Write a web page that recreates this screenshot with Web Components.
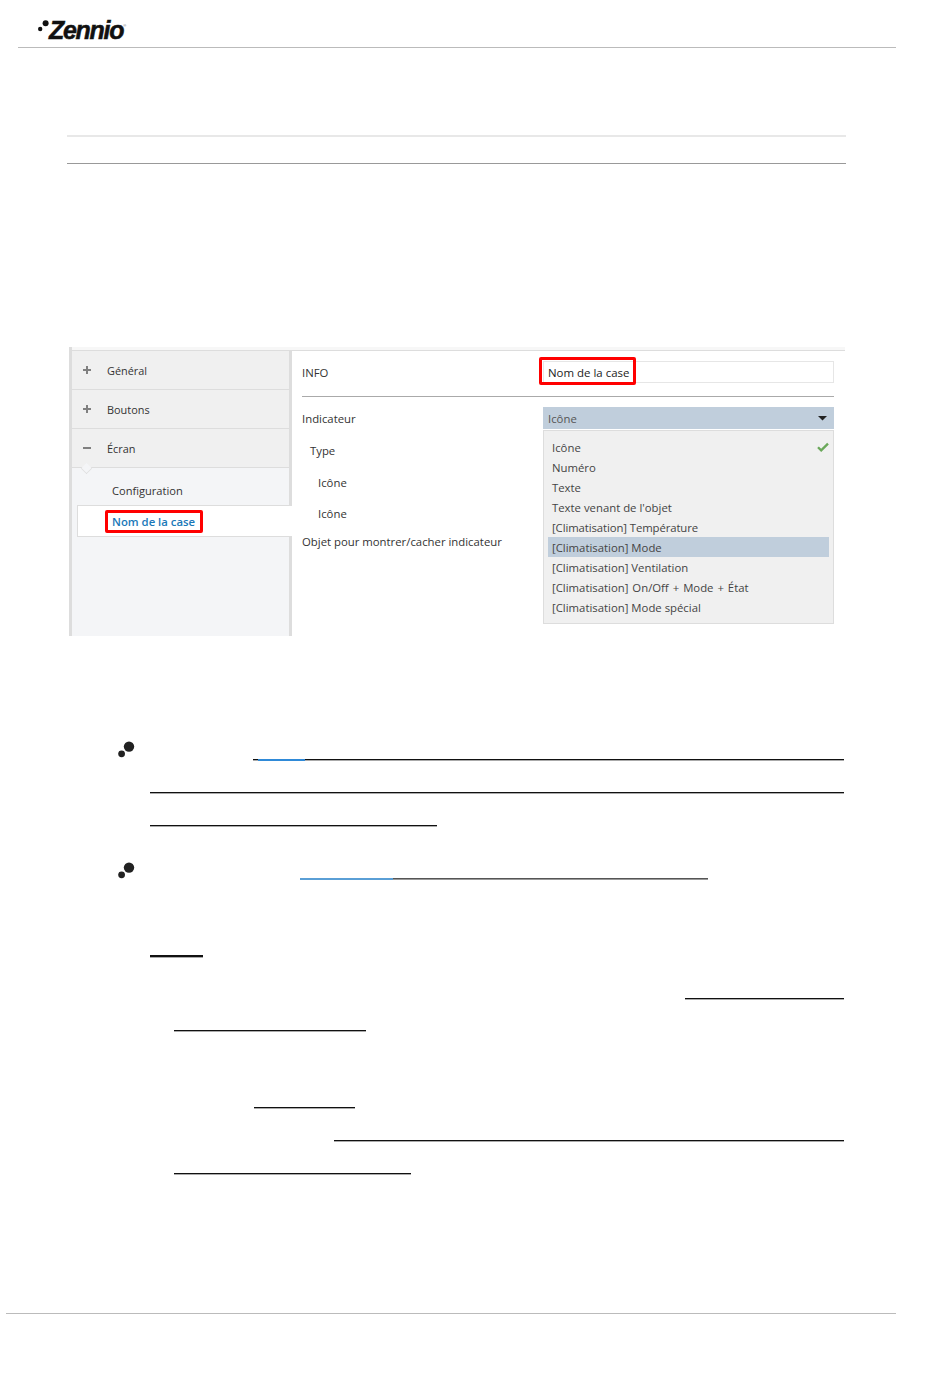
<!DOCTYPE html>
<html lang="fr"><head><meta charset="utf-8"><title>Zennio</title>
<style>
html,body{margin:0;padding:0;background:#fff}
body{width:950px;height:1378px;overflow:hidden;font-family:"Open Sans","Noto Sans",sans-serif;font-size:11.35px;color:#333}
</style></head><body>
<zn-header></zn-header>
<doc-rule style="--t:87px;--x:67px;--w:779px;--h:2px;--c:#e8e8e8"></doc-rule>
<doc-rule style="--t:26px;--x:67px;--w:779px;--h:1px;--c:#999"></doc-rule>
<zn-figure style="--t:183px">
  <side-nav slot="nav">
    <nav-group icon="plus">Général</nav-group>
    <nav-group icon="plus">Boutons</nav-group>
    <nav-group icon="minus" open>Écran</nav-group>
    <nav-sub>Configuration</nav-sub>
    <nav-sub selected>Nom de la case</nav-sub>
  </side-nav>
  <param-panel slot="panel"></param-panel>
</zn-figure>
<doc-bullet style="--t:105px;--h:18px"></doc-bullet>
<doc-line style="--x:253px;--w:591px"><span style="flex:0 0 5px"></span><b style="flex:0 0 47px;background:#2f8ad8"></b></doc-line>
<doc-line style="--t:31px;--x:150px;--w:694px"></doc-line>
<doc-line style="--t:31px;--x:150px;--w:287px"></doc-line>
<doc-bullet style="--t:35px;--h:16px"></doc-bullet>
<doc-line style="--x:300px;--w:408px;--c:#555;--c2:#999"><b style="flex:0 0 93px;background:#5a9fd6"></b></doc-line>
<doc-line style="--t:75px;--x:150px;--w:53px;--h1:2px"></doc-line>
<doc-line style="--t:40px;--x:685px;--w:159px"></doc-line>
<doc-line style="--t:30px;--x:174px;--w:192px"></doc-line>
<doc-line style="--t:75px;--x:254px;--w:101px"></doc-line>
<doc-line style="--t:31px;--x:334px;--w:510px"></doc-line>
<doc-line style="--t:31px;--x:174px;--w:237px"></doc-line>
<doc-rule style="--t:138px;--x:6px;--w:890px;--h:1px;--c:#bbb"></doc-rule>
<script>
function def(name, css, html){
  customElements.define(name, class extends HTMLElement{
    constructor(){super();const r=this.attachShadow({mode:"open"});r.innerHTML="<style>"+css+"</style>"+(typeof html==="function"?html(this):html);}
    connectedCallback(){
      if(typeof html==="function"){this.shadowRoot.innerHTML="<style>"+css+"</style>"+html(this);}
    }
  });
}
def("zn-header",
 `:host{display:block;margin-left:18px;width:878px;height:47px;border-bottom:1px solid #bbb;box-sizing:content-box}
  .logo{display:flex;align-items:flex-start;padding:16px 0 0 20px;color:#111}
  svg{display:block;margin-top:4px;flex:none}
  .t{font:italic 700 25px/28px "Liberation Sans",sans-serif;letter-spacing:-1.3px;margin-left:0;-webkit-text-stroke:.5px #111}
  .r{font:4px/4px "Liberation Sans",sans-serif;margin-top:8px;color:#666}`,
 `<div class="logo"><svg width="11" height="14" viewBox="0 0 11 14"><circle cx="7.6" cy="3.2" r="3" fill="#111"/><circle cx="2.2" cy="9" r="2.2" fill="#111"/></svg><span class="t">Zennio</span><span class="r">®</span></div>`);
def("doc-rule",
 `:host{display:block;margin-top:var(--t,0);margin-left:var(--x);width:var(--w);height:var(--h);background:var(--c)}`,``);
def("doc-line",
 `:host{display:flex;margin-top:var(--t,0);margin-left:var(--x);width:var(--w);height:calc(var(--h1,1px) + 1px);box-sizing:border-box;background:linear-gradient(var(--c,#111) 0 var(--h1,1px),var(--c2,#aaa) var(--h1,1px))}`,
 `<slot></slot>`);
def("doc-bullet",
 `:host{display:block;margin-top:var(--t,0);margin-left:116px;height:var(--h);width:22px}
  svg{display:block}`,
 `<svg width="22" height="18" viewBox="0 0 22 18"><circle cx="13" cy="5.6" r="5.2" fill="#222"/><circle cx="5.6" cy="12.8" r="3.4" fill="#222"/></svg>`);
def("zn-figure",
 `:host{display:block;margin-top:var(--t);margin-left:69px;width:776px;height:289px;background:linear-gradient(#f7f7f7 0 3px,#ddd 3px 4px,transparent 4px)}
  .in{display:flex;height:289px;box-sizing:border-box;padding-top:4px}`,
 `<div class="in"><slot name="nav"></slot><slot name="panel"></slot></div>`);
def("side-nav",
 `:host{display:block;flex:0 0 223px;margin-top:-4px;padding-top:4px;box-sizing:border-box;width:223px;height:289px;border-left:3px solid #ddd;border-right:3px solid transparent;color:#333;
   background:linear-gradient(#ddd,#ddd) right bottom/3px 286px no-repeat border-box,linear-gradient(#f7f7f7 0 3px,#ddd 3px 4px,#f4f5f7 4px) padding-box,#f7f7f7 border-box}`,
 `<slot></slot>`);
def("nav-group",
 `:host{display:flex;align-items:center;height:39px;box-sizing:border-box;border-bottom:1px solid #ddd;background:#f0f0f0;position:relative;font-size:10.9px}
  svg{margin-left:10px;margin-right:15px;flex:none}
  .n{position:absolute;left:9px;bottom:-7px;width:10px;height:10px;background:#f4f5f7;border-right:1px solid #ddd;border-bottom:1px solid #ddd;transform:rotate(45deg) scale(.72)}`,
 h=>{const plus=h.getAttribute("icon")==="plus";
  return `<svg width="10" height="10" viewBox="0 0 10 10" fill="#808080"><rect x="1" y="4" width="8" height="2"/>${plus?'<rect x="4" y="1" width="2" height="8"/>':''}</svg><slot></slot>${h.hasAttribute("open")?'<i class="n"></i>':''}`});
def("nav-sub",
 `:host{display:flex;align-items:center;box-sizing:border-box;height:37px;padding:8px 0 0 40px;font-size:11.1px}
  :host([selected]){height:32px;padding:0 0 0 27px;margin:0 -3px 0 5px;background:#fff;border:1px solid #ddd;border-right:0;color:#1a78b8;font-weight:600;font-size:11.35px}
  :host([selected]) .box{border:3px solid #f00;border-radius:2px;padding:0 4px 0 4px;width:98px;height:23px;box-sizing:border-box;display:flex;align-items:center;background:#fff}`,
 h=>h.hasAttribute("selected")?`<span class="box"><slot></slot></span>`:`<slot></slot>`);
def("param-panel",
 `:host{display:block;flex:0 0 553px;box-sizing:border-box;padding:0 11px 0 10px;color:#333}
  .top{display:flex;align-items:center;height:45px;border-bottom:1px solid #aaa;box-sizing:content-box}
  .top>span{flex:0 0 241px;margin-top:-3px}
  .inp{position:relative;flex:1;height:22px;box-sizing:border-box;border:1px solid #e6e6e6;display:flex;align-items:center;padding-left:4px;color:#222;margin-top:-3px;font-size:11.45px}
  .red{position:absolute;left:-5px;top:-5px;width:97px;height:28px;box-sizing:border-box;border:3px solid #f00;border-radius:2px}
  .cols{display:flex}
  .labels{flex:0 0 241px;display:flex;flex-direction:column;padding-top:12px}
  .labels div{height:20px;line-height:20px}
  .right{flex:1;padding-top:10px}
  .dd{height:22px;background:#c0cedc;display:flex;align-items:center;justify-content:space-between;padding:0 7px 0 5px;color:#555;box-sizing:border-box}
  .dd svg{display:block}
  .menu{margin-top:1px;height:194px;box-sizing:border-box;border:1px solid #ddd;background:#f0f0f0;padding:6px 4px 0;color:#444}
  .it{height:20px;line-height:22px;padding-left:4px;display:flex;align-items:flex-start;justify-content:space-between}
  .it svg{margin-top:5px}
  .it.h{background:#c0cedc}`,
 `<div class="top"><span>INFO</span><div class="inp">Nom de la case<i class="red"></i></div></div>
  <div class="cols">
   <div class="labels">
    <div>Indicateur</div>
    <div style="margin-top:12px;padding-left:8px">Type</div>
    <div style="margin-top:12px;padding-left:16px">Icône</div>
    <div style="margin-top:11px;padding-left:16px">Icône</div>
    <div style="margin-top:8px">Objet pour montrer/cacher indicateur</div>
   </div>
   <div class="right">
    <div class="dd">Icône<svg width="9" height="5" viewBox="0 0 9 5"><path d="M0 0h9L4.5 4.5z" fill="#222"/></svg></div>
    <div class="menu">
     <div class="it">Icône<svg width="12" height="10" viewBox="0 0 12 10"><path d="M1 5.2l3.2 3.2L11 1.6" fill="none" stroke="#6aa85a" stroke-width="2.3"/></svg></div>
     <div class="it">Numéro</div>
     <div class="it">Texte</div>
     <div class="it">Texte venant de l'objet</div>
     <div class="it" style="letter-spacing:-.1px">[Climatisation] Température</div>
     <div class="it">[Climatisation] Mode</div>
     <div class="it">[Climatisation] Ventilation</div>
     <div class="it" style="word-spacing:1px">[Climatisation] On/Off + Mode + État</div>
     <div class="it">[Climatisation] Mode spécial</div>
    </div>
   </div>
  </div>`.replace('<div class="it">[Climatisation] Mode</div>','<div class="it h">[Climatisation] Mode</div>'));
</script>
</body></html>
